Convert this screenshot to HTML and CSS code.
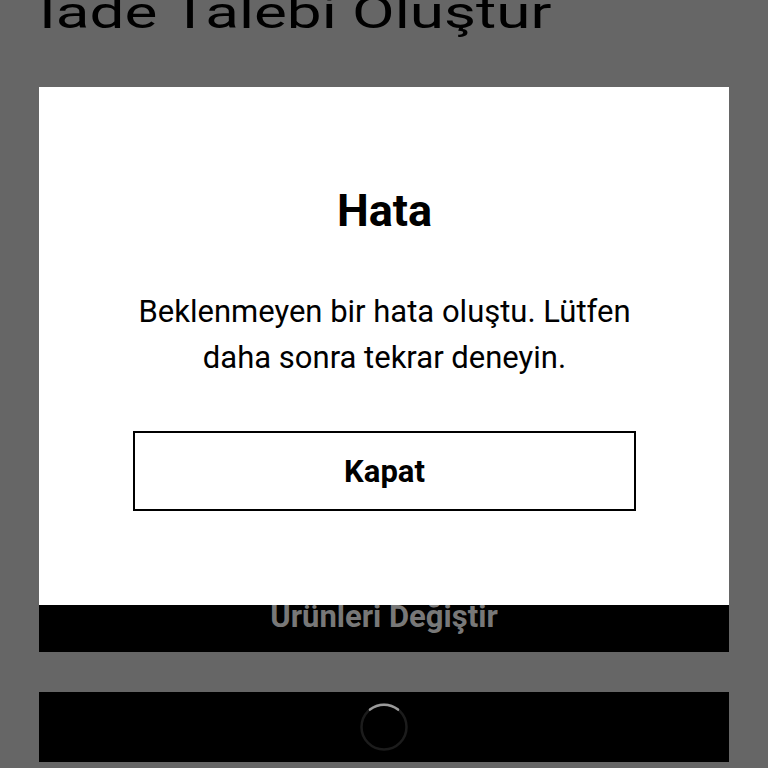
FILE: index.html
```html
<!DOCTYPE html>
<html lang="tr">
<head>
    <meta charset="UTF-8">
    <meta name="viewport" content="width=device-width, initial-scale=1.0">
    <title>İade Talebi Oluştur</title>
    <link rel="stylesheet" href="styles.css">
</head>
<body>
    <div class="page">
        <h1 class="page-title">İade Talebi Oluştur</h1>

        <div class="actions">
            <button class="action-btn" disabled>Ürünleri Değiştir</button>
            <button class="action-btn loading" disabled>
                <svg class="spinner" width="52" height="52" viewBox="0 0 52 52">
                    <circle cx="26" cy="26" r="22.5" fill="none" stroke="#1c1c1c" stroke-width="2.5"/>
                    <path d="M12 8.6 A22.5 22.5 0 0 1 40 8.6" fill="none" stroke="#9a9a9a" stroke-width="2.5" stroke-linecap="round"/>
                </svg>
            </button>
        </div>
    </div>

    <div class="overlay">
        <div class="dialog">
            <h2 class="dialog-title">Hata</h2>
            <p class="dialog-text">Beklenmeyen bir hata oluştu. Lütfen daha sonra tekrar deneyin.</p>
            <button class="dialog-btn">Kapat</button>
        </div>
    </div>
</body>
</html>
```

FILE: styles.css
```css
body {
    margin: 0;
    font-family: Roboto, "Noto Sans", Arial, sans-serif;
    background-color: #666;
    height: 100vh;
    overflow: hidden;
}

.page {
    padding: 0 39px;
}

.page-title {
    font-family: Roboto, Arial, sans-serif;
    font-weight: normal;
    font-size: 62px;
    line-height: 61px;
    margin: -9px 0 0 0;
    color: #000;
    white-space: nowrap;
    transform: scaleY(0.72);
    transform-origin: left top;
}

.actions {
    display: flex;
    flex-direction: column;
    gap: 40px;
    margin-top: 528px;
}

.action-btn {
    height: 72px;
    border: none;
    padding: 0;
    background-color: #000;
    color: #787878;
    font-family: Roboto, Arial, sans-serif;
    font-weight: bold;
    font-size: 31px;
    display: flex;
    align-items: center;
    justify-content: center;
}

.action-btn.loading {
    height: 70px;
}

.overlay {
    position: fixed;
    top: 0;
    left: 0;
    right: 0;
    bottom: 0;
}

.dialog {
    position: absolute;
    top: 87px;
    left: 39px;
    width: 690px;
    box-sizing: border-box;
    padding: 97px 93px 94px 94px;
    background-color: #fff;
    text-align: center;
    color: #000;
}

.dialog-title {
    font-size: 45px;
    line-height: 54px;
    font-weight: bold;
    margin: 0 0 51px;
}

.dialog-text {
    font-size: 31px;
    line-height: 46px;
    margin: 0 0 50px;
}

.dialog-btn {
    display: block;
    width: 100%;
    height: 80px;
    border: 2px solid #000;
    background-color: #fff;
    font-family: Roboto, Arial, sans-serif;
    font-weight: bold;
    font-size: 31px;
    color: #000;
}
```
